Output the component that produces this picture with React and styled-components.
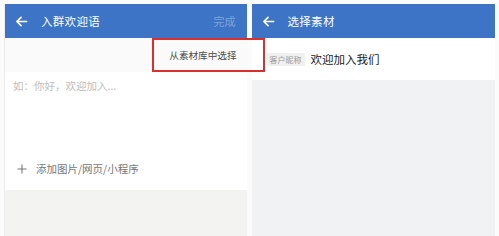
import React from "react";
import styled, { createGlobalStyle } from "styled-components";

const GlobalStyle = createGlobalStyle`
  html, body {
    margin: 0;
    padding: 0;
    background: #fbfbfb;
    font-family: "Noto Sans CJK SC", "Noto Sans", sans-serif;
  }
`;

export default function App() {
  return (
    <>
      <GlobalStyle />
      <Page>
        <Panel>
          <Header>
            <BackArrow />
            <Title>入群欢迎语</Title>
            <Done>完成</Done>
          </Header>
          <ToolRow>
            <PickLink>从素材库中选择</PickLink>
          </ToolRow>
          <Editor>
            <Placeholder>如：你好，欢迎加入...</Placeholder>
            <AddLink>
              <PlusIcon viewBox="0 0 10 10" width="10" height="10">
                <path d="M5 0.5v9M0.5 5h9" stroke="#777" strokeWidth="1.1" />
              </PlusIcon>
              添加图片/网页/小程序
            </AddLink>
          </Editor>
          <Footer />
          <Highlight />
        </Panel>

        <Panel $right>
          <Header>
            <BackArrow />
            <Title>选择素材</Title>
          </Header>
          <MaterialRow>
            <Tag>客户昵称</Tag>
            <MaterialText>欢迎加入我们</MaterialText>
          </MaterialRow>
          <Rest />
        </Panel>
      </Page>
    </>
  );
}

function BackArrow() {
  return (
    <ArrowIcon viewBox="0 0 14 14" width="13" height="13">
      <path
        d="M12.5 7H2M6.5 2.5L2 7l4.5 4.5"
        fill="none"
        stroke="#fff"
        strokeWidth="1.8"
        strokeLinecap="round"
        strokeLinejoin="round"
      />
    </ArrowIcon>
  );
}

const Page = styled.div`
  display: flex;
  gap: 5px;
  padding: 4px 4px 0 4px;
  height: 232px;
`;
const Panel = styled.div`
  position: relative;
  width: ${(p) => (p.$right ? "244px" : "242px")};
  display: flex;
  flex-direction: column;
  background: ${(p) => (p.$right ? "#f1f2f4" : "#fff")};
  border-left: ${(p) => (p.$right ? "none" : "1px solid #ececec")};
`;
const Header = styled.div`
  height: 34px;
  flex-shrink: 0;
  background: #3e74c6;
  display: flex;
  align-items: center;
  padding: 0 10px;
  color: #fff;
`;
const ArrowIcon = styled.svg`
  display: block;
  margin-right: 13px;
`;
const Title = styled.div`
  font-size: 11.5px;
  flex: 1;
  letter-spacing: 0.3px;
`;
const Done = styled.div`
  font-size: 11px;
  color: rgba(255, 255, 255, 0.35);
  margin-right: 1px;
`;
const ToolRow = styled.div`
  height: 34px;
  display: flex;
  align-items: center;
  justify-content: flex-end;
  padding-right: 10px;
  background: #fafafa;
`;
const PickLink = styled.div`
  font-size: 9.6px;
  color: #4a4a4a;
`;
const Editor = styled.div`
  height: 118px;
  display: flex;
  flex-direction: column;
  justify-content: space-between;
  padding: 6px 8px 14px 8px;
  box-sizing: border-box;
`;
const Placeholder = styled.div`
  font-size: 10.5px;
  color: #bcbcbc;
`;
const AddLink = styled.div`
  display: flex;
  align-items: center;
  font-size: 10.5px;
  color: #777;
`;
const PlusIcon = styled.svg`
  display: block;
  margin: 0 9px 0 4px;
`;
const Footer = styled.div`
  flex: 1;
  background: #f3f3f1;
`;
const Highlight = styled.div`
  position: absolute;
  left: 147px;
  top: 34px;
  width: 113px;
  height: 34px;
  border: 2px solid #d8312d;
  box-sizing: border-box;
  z-index: 2;
`;
const MaterialRow = styled.div`
  height: 42px;
  background: #fff;
  display: flex;
  align-items: center;
  padding-left: 15px;
`;
const Tag = styled.span`
  font-size: 8px;
  color: #999;
  background: #f0f0f0;
  padding: 1px 3px;
  margin-right: 6px;
`;
const MaterialText = styled.span`
  font-size: 11.5px;
  color: #222;
`;
const Rest = styled.div`
  flex: 1;
`;
